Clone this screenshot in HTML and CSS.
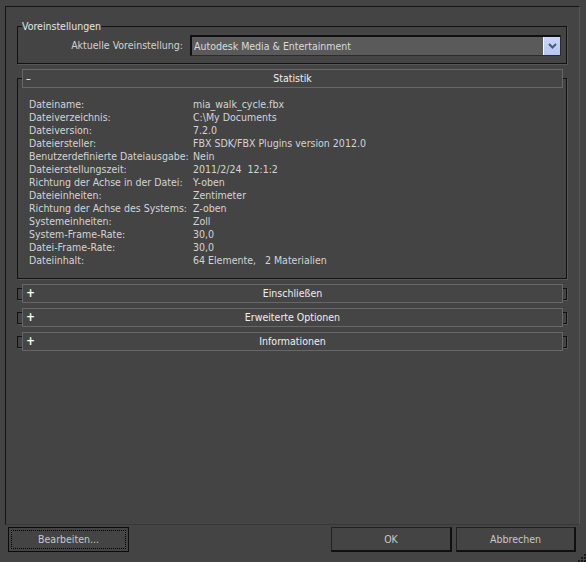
FILE: index.html
```html
<!DOCTYPE html>
<html lang="de">
<head>
<meta charset="utf-8">
<title>FBX Import</title>
<link rel="stylesheet" href="styles.css">
</head>
<body>
<div class="frame">
  <fieldset class="group">
    <legend class="group-legend">Voreinstellungen</legend>
    <div class="preset-row">
      <span class="preset-label">Aktuelle Voreinstellung:</span>
      <div class="select">
        <span class="select-text">Autodesk Media &amp; Entertainment</span>
        <span class="select-btn">
          <svg class="chev" width="9" height="6" viewBox="0 0 9 6"><path d="M1 1 L4.5 4.5 L8 1" fill="none" stroke="#4b5878" stroke-width="2"/></svg>
        </span>
      </div>
    </div>
  </fieldset>

  <section class="rollout open">
    <div class="rollout-head"><span class="sign minus">–</span><span class="title">Statistik</span><span></span></div>
    <div class="stats">
      <span>Dateiname:</span><span>mia_walk_cycle.fbx</span>
      <span>Dateiverzeichnis:</span><span>C:\My Documents</span>
      <span>Dateiversion:</span><span>7.2.0</span>
      <span>Dateiersteller:</span><span>FBX SDK/FBX Plugins version 2012.0</span>
      <span>Benutzerdefinierte Dateiausgabe:</span><span>Nein</span>
      <span>Dateierstellungszeit:</span><span class="pre">2011/2/24  12:1:2</span>
      <span>Richtung der Achse in der Datei:</span><span>Y-oben</span>
      <span>Dateieinheiten:</span><span>Zentimeter</span>
      <span>Richtung der Achse des Systems:</span><span>Z-oben</span>
      <span>Systemeinheiten:</span><span>Zoll</span>
      <span>System-Frame-Rate:</span><span>30,0</span>
      <span>Datei-Frame-Rate:</span><span>30,0</span>
      <span>Dateiinhalt:</span><span class="pre">64 Elemente,   2 Materialien</span>
    </div>
  </section>

  <section class="rollout closed first-closed">
    <div class="rollout-head"><span class="sign">+</span><span class="title">Einschließen</span><span></span></div>
  </section>
  <section class="rollout closed">
    <div class="rollout-head"><span class="sign">+</span><span class="title">Erweiterte Optionen</span><span></span></div>
  </section>
  <section class="rollout closed">
    <div class="rollout-head"><span class="sign">+</span><span class="title">Informationen</span><span></span></div>
  </section>
</div>

<div class="footer">
  <button class="btn btn-focus"><span class="btn-label">Bearbeiten...</span></button>
  <button class="btn btn-ok">OK</button>
  <button class="btn btn-cancel">Abbrechen</button>
</div>

<svg class="grip" width="10" height="10" viewBox="0 0 10 10">
  <rect x="8" y="2" width="2" height="2" fill="#1a1a1a"/>
  <rect x="5" y="5" width="2" height="2" fill="#1a1a1a"/>
  <rect x="8" y="5" width="2" height="2" fill="#1a1a1a"/>
  <rect x="2" y="8" width="2" height="2" fill="#1a1a1a"/>
  <rect x="5" y="8" width="2" height="2" fill="#1a1a1a"/>
  <rect x="8" y="8" width="2" height="2" fill="#1a1a1a"/>
</svg>
</body>
</html>
```

FILE: styles.css
```css
html, body {
  margin: 0;
  padding: 0;
}

body {
  width: 586px;
  height: 562px;
  overflow: hidden;
  background: #444444;
  color: #d4d4d4;
  font-family: "DejaVu Sans Condensed", "DejaVu Sans", sans-serif;
  font-stretch: condensed;
  font-size: 10.5px;
  line-height: 13px;
  position: relative;
}

.frame {
  box-sizing: border-box;
  width: 575px;
  height: 519px;
  margin: 6px 0 0 5px;
  padding: 13px 12px 0 11px;
  border: 1px solid;
  border-color: #141414 #555555 #383838 #141414;
}

/* ---- Voreinstellungen group ---- */
.group {
  margin: 0;
  padding: 2px 0 7px 0;
  min-inline-size: 0;
  border: 1px solid #121212;
  box-shadow: 1px 1px 0 #565656;
}

.group-legend {
  padding: 0;
  margin-left: 4px;
  line-height: 13px;
  color: #e4e4e4;
}

.preset-row {
  display: flex;
  align-items: center;
}

.preset-label {
  flex: 1;
  text-align: right;
  padding-right: 7px;
  color: #d2d2d2;
  white-space: nowrap;
}

.select {
  box-sizing: border-box;
  width: 371px;
  height: 21px;
  margin-right: 5px;
  display: flex;
  background: #5a5a5a;
  border-style: solid;
  border-width: 2px 1px 1px 2px;
  border-color: #101010 #2c2c2c #2c2c2c #101010;
}

.select-text {
  flex: 1;
  padding-left: 2px;
  line-height: 18px;
  color: #dadada;
  white-space: nowrap;
}

.select-btn {
  width: 17px;
  height: 18px;
  box-sizing: border-box;
  border-left: 1px solid #f4f6ff;
  background: linear-gradient(#cbd7f8, #b8c7f1);
  display: flex;
  align-items: center;
  justify-content: center;
}

.chev {
  display: block;
  margin-left: 1px;
}

/* ---- Rollouts ---- */
.rollout {
  margin-top: 14px;
  border: 1px solid #121212;
  box-shadow: 1px 1px 0 #565656;
}

.rollout-head {
  box-sizing: border-box;
  height: 19px;
  margin: -10px 3px 0 4px;
  border: 1px solid #676767;
  background: #454545;
  color: #f0f0f0;
  display: grid;
  grid-template-columns: 16px 1fr 16px;
  align-items: center;
  line-height: 17px;
}

.sign {
  padding-left: 3px;
  color: #ffffff;
}

.closed .sign {
  font-weight: bold;
  font-family: "DejaVu Sans", sans-serif;
  font-size: 12px;
}

.title {
  text-align: center;
  white-space: nowrap;
}

.closed {
  height: 10px;
  margin-top: 12px;
}

.closed .rollout-head {
  margin-top: -5px;
}

.first-closed {
  margin-top: 9px;
}

.stats {
  display: grid;
  grid-template-columns: 164px 1fr;
  padding: 10px 0 11px 11px;
  line-height: 13px;
  color: #d4d4d4;
  white-space: nowrap;
}

.pre {
  white-space: pre;
}

/* ---- Footer buttons ---- */
.footer {
  display: flex;
  margin-top: 2px;
  padding: 0 10px 0 8px;
}

.btn {
  box-sizing: border-box;
  height: 25px;
  margin: 0;
  padding: 0;
  background: #444444;
  color: #c8c8c8;
  font: inherit;
  line-height: 21px;
  border-style: solid;
  border-width: 1px 2px 2px 1px;
  border-color: #222222 #101010 #101010 #222222;
}

.btn-focus {
  width: 121px;
  border-width: 1px;
  border-color: #0c0c0c;
  outline: 1px dotted #000000;
  outline-offset: -4px;
}

.btn-ok {
  width: 121px;
  margin-left: auto;
}

.btn-cancel {
  width: 120px;
  margin-left: 4px;
}

.grip {
  position: absolute;
  right: 0;
  bottom: 0;
  display: block;
}
```
